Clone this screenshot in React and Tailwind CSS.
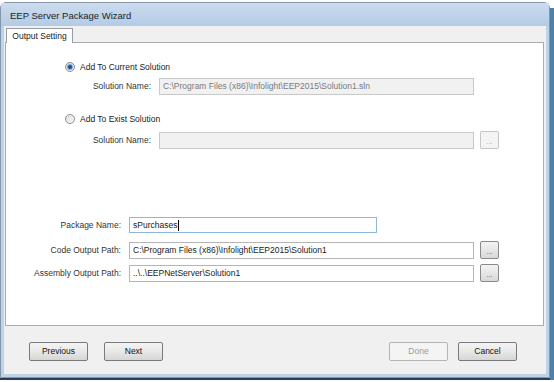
import React from "react";

function Radio({ checked }) {
  return (
    <span className="relative flex h-[10px] w-[10px] items-center justify-center rounded-full border border-[#8e8f8f] bg-gradient-to-br from-[#dcdcdc] to-[#fbfbfb]">
      {checked ? (
        <span className="h-[4px] w-[4px] rounded-full bg-[#1c4f8c] shadow-[0_0_1px_1px_#6fa3dc]" />
      ) : null}
    </span>
  );
}

function TextBox({ value, width, disabled, focused, caret, height = "h-[17px]" }) {
  return (
    <div
      className={`flex items-center border px-[3px] text-[8.5px] leading-none ${height} ${width} ${
        disabled
          ? "border-[#c9c9c9] bg-[#f1f1f1] text-[#7a7a7a]"
          : focused
          ? "border-[#8fb6dc] bg-white text-[#1a1a1a]"
          : "border-[#b5b5b5] bg-white text-[#1a1a1a]"
      }`}
    >
      <span className="whitespace-nowrap">{value}</span>
      {caret ? <span className="ml-[1px] h-[11px] w-px bg-black" /> : null}
    </div>
  );
}

function BrowseButton({ disabled }) {
  return (
    <div
      className={`flex h-[18px] w-[19px] items-end justify-center rounded-[2px] border pb-[3px] text-[7px] leading-none ${
        disabled
          ? "border-[#c6c6c6] bg-[#f4f4f4] text-[#a0a0a0]"
          : "border-[#8a8a8a] bg-gradient-to-b from-[#f3f3f3] to-[#d9d9d9] text-[#555]"
      }`}
    >
      ...
    </div>
  );
}

function Button({ label, disabled }) {
  return (
    <div
      className={`flex h-[19px] w-[59px] items-center justify-center rounded-[2px] border text-[8.5px] leading-none ${
        disabled
          ? "border-[#b5b5b5] bg-[#f4f4f4] text-[#9a9a9a]"
          : "border-[#7a7a7a] bg-gradient-to-b from-[#f4f4f4] via-[#e8e8e8] to-[#d6d6d6] text-[#111]"
      }`}
    >
      {label}
    </div>
  );
}

function FieldRow({ labelWidth, label, children, className = "" }) {
  return (
    <div className={`flex items-center ${className}`}>
      <div className={`${labelWidth} text-right text-[8.5px] leading-none text-[#333]`}>{label}</div>
      <div className="ml-[8px] flex items-center gap-[6px]">{children}</div>
    </div>
  );
}

export default function App() {
  return (
    <div className="flex h-[382px] w-[554px] bg-white font-['Liberation_Sans',Arial,sans-serif]">
      <div className="flex w-[550px] flex-col pt-[2px]">
        <div className="flex h-[376px] flex-col rounded-t-[6px] border border-[#8596ab] bg-[#bdd3ea]">
          <div className="flex h-[23px] items-center bg-gradient-to-b from-[#cddcee] to-[#b3cbe6] pl-[9px] pt-[4px] text-[9.5px] text-[#1e1e1e]">
            EEP Server Package Wizard
          </div>
          <div className="mx-[3px] mb-[3px] flex flex-1 flex-col bg-[#f0f0f0]">
            <div className="ml-[2px] mt-[2px] flex">
              <div className="relative z-10 -mb-px flex h-[15px] w-[67px] items-center justify-center border border-b-0 border-[#9a9ca3] bg-white text-[8.5px] leading-none text-[#222]">
                Output Setting
              </div>
            </div>
            <div className="ml-px mr-[2px] flex h-[284px] flex-col border border-[#a9abb0] bg-white">
              <div className="ml-[59px] mt-[18px] flex h-[12px] items-center gap-[5px]">
                <Radio checked />
                <span className="text-[8.5px] leading-none text-[#222]">Add To Current Solution</span>
              </div>
              <FieldRow labelWidth="w-[145px]" label="Solution Name:" className="mt-[5px]">
                <TextBox
                  width="w-[315px]"
                  disabled
                  value="C:\Program Files (x86)\Infolight\EEP2015\Solution1.sln"
                />
              </FieldRow>
              <div className="ml-[59px] mt-[18px] flex h-[12px] items-center gap-[5px]">
                <Radio />
                <span className="text-[8.5px] leading-none text-[#222]">Add To Exist Solution</span>
              </div>
              <FieldRow labelWidth="w-[145px]" label="Solution Name:" className="mt-[6px]">
                <TextBox width="w-[315px]" disabled value="" />
                <BrowseButton disabled />
              </FieldRow>
              <FieldRow labelWidth="w-[115px]" label="Package Name:" className="mt-[68px]">
                <TextBox width="w-[248px]" height="h-[16px]" focused caret value="sPurchases" />
              </FieldRow>
              <FieldRow labelWidth="w-[115px]" label="Code Output Path:" className="mt-[8px]">
                <TextBox width="w-[345px]" value="C:\Program Files (x86)\Infolight\EEP2015\Solution1" />
                <BrowseButton />
              </FieldRow>
              <FieldRow labelWidth="w-[115px]" label="Assembly Output Path:" className="mt-[5px]">
                <TextBox width="w-[345px]" value="..\..\EEPNetServer\Solution1" />
                <BrowseButton />
              </FieldRow>
            </div>
            <div className="mt-[16px] flex pl-[25px] pr-[29px]">
              <div className="flex gap-[16px]">
                <Button label="Previous" />
                <Button label="Next" />
              </div>
              <div className="ml-auto flex gap-[10px]">
                <Button label="Done" disabled />
                <Button label="Cancel" />
              </div>
            </div>
          </div>
        </div>
        <div className="h-[2px] bg-[#2e3d4d]" />
      </div>
      <div className="mt-[8px] h-[372px] w-[4px] bg-[#4f80aa]" />
    </div>
  );
}
